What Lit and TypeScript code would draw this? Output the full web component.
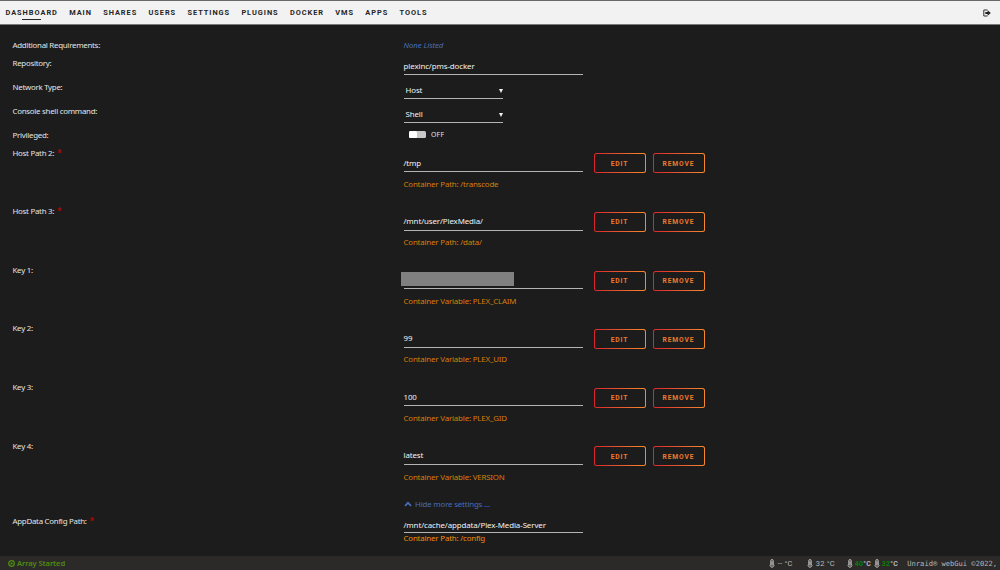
import { LitElement, html, css, svg } from "lit";
import { customElement } from "lit/decorators.js";

interface Setting {
  label: string;
  value: string;
  note: string;
  required?: boolean;
  masked?: boolean;
}

const MENU = ["DASHBOARD", "MAIN", "SHARES", "USERS", "SETTINGS", "PLUGINS", "DOCKER", "VMS", "APPS", "TOOLS"];

const SETTINGS: Setting[] = [
  { label: "Host Path 2:", value: "/tmp", note: "Container Path: /transcode", required: true },
  { label: "Host Path 3:", value: "/mnt/user/PlexMedia/", note: "Container Path: /data/", required: true },
  { label: "Key 1:", value: "", note: "Container Variable: PLEX_CLAIM", masked: true },
  { label: "Key 2:", value: "99", note: "Container Variable: PLEX_UID" },
  { label: "Key 3:", value: "100", note: "Container Variable: PLEX_GID" },
  { label: "Key 4:", value: "latest", note: "Container Variable: VERSION" },
];

const thermometer = html`<svg class="thermo" viewBox="0 0 6 9">
  ${svg`<path d="M1.7 5V1.8a1.3 1.3 0 0 1 2.6 0V5a1.9 1.9 0 1 1-2.6 0z" fill="#55524e" stroke="#b4b4b4" stroke-width=".9"/>
  <path d="M3 2.4v4" stroke="#e4e4e4" stroke-width=".8"/>`}
</svg>`;

@customElement("app-root")
export class AppRoot extends LitElement {
  static styles = css`
    * { box-sizing: border-box; }
    :host {
      display: flex;
      flex-direction: column;
      width: 1000px;
      height: 570px;
      overflow: hidden;
      background: #1c1c1c;
      color: #e4e4e4;
      font: 7.9px/10px "Noto Sans", sans-serif;
      letter-spacing: -.27px;
      white-space: nowrap;
    }
    .top {
      flex: none;
      display: flex;
      align-items: center;
      height: 25px;
      padding: 0 9px 0 5.5px;
      border-top: 1px solid #6b686b;
      border-bottom: 1px solid #777a78;
      background: #f2f2f2;
      color: #252525;
    }
    .menu { display: flex; flex: 1; gap: 11.3px; }
    .item {
      display: flex;
      flex-direction: column;
      align-items: center;
      font-family: Roboto, sans-serif;
      font-size: 7.4px;
      font-weight: 700;
      letter-spacing: .96px;
      height: 14px;
      padding-top: 2px;
    }
    .active::after { content: ""; flex: none; width: 19px; height: 1px; margin-top: 1px; background: #252525; }
    .logout { width: 8px; height: 8px; }
    .form { flex: 1; min-height: 0; padding: 12px 0 0 12.5px; overflow: hidden; }
    .row { display: grid; grid-template-columns: 391px 191px auto; height: 24px; }
    .short { height: 17px; }
    .short .label, .none { padding-top: 3px; }
    .switchrow { height: 18px; }
    .setting { height: 58.6px; }
    .toggle { height: 16.9px; }
    .label { padding-top: 4px; }
    .setting .label { padding-top: 3.6px; }
    .star { color: #d80000; margin-left: 1px; font-size: 8.5px; line-height: 8px; }
    .none { color: #486dba; font-style: italic; letter-spacing: -.1px; }
    .field { width: 179px; height: 21px; padding-top: 7px; border-bottom: 1px solid #b4b4b4; color: #f2f2f2; letter-spacing: -.1px; }
    .select { display: flex; justify-content: space-between; width: 99.5px; padding: 7px 0 0 2px; }
    .arrow { width: 4px; height: 4px; margin-top: 3.5px; }
    .setting .field { height: 28px; padding-top: 13.5px; }
    .mask { width: 112.5px; height: 13.5px; margin: -2.5px 0 0 -2.5px; background: #808080; }
    .note { margin-top: 6.6px; color: #d67e0a; letter-spacing: -.18px; }
    .tight .field { padding-top: 7.5px; }
    .tight .note { margin-top: 0; color: #ef8c08; }
    .switch { display: flex; align-items: center; gap: 5.5px; padding: 0 0 1px 5.5px; font-size: 6.8px; letter-spacing: .3px; }
    .track { width: 16.5px; height: 7.5px; border-radius: 1.5px; background: #c8c8c8; display: flex; }
    .thumb { width: 8px; border-radius: 1.5px; background: #fff; }
    .buttons { display: flex; gap: 7px; padding-top: 9.4px; margin-left: -1px; }
    .btn {
      display: grid;
      place-items: center;
      width: 52px;
      height: 20px;
      padding-top: 1px;
      border: 1.5px solid transparent;
      border-radius: 2.5px;
      background: linear-gradient(#1c1c1c, #1c1c1c) padding-box, linear-gradient(90deg, #d9262d, #f58a2e) border-box;
      color: #ee7b2b;
      font-family: Roboto, sans-serif;
      font-size: 6.7px;
      font-weight: 700;
      letter-spacing: .9px;
    }
    .hide { display: flex; gap: 3.5px; align-items: center; color: #486dba; letter-spacing: -.18px; }
    .chev { width: 8px; height: 6px; }
    .bottom {
      flex: none;
      display: flex;
      align-items: center;
      justify-content: space-between;
      height: 14px;
      padding: 0 3px 0 8px;
      background: #2b2a29;
      color: #b8b8b8;
    }
    .state { display: flex; align-items: center; gap: 2px; color: #4f8a10; font-weight: 600; font-size: 7.6px; letter-spacing: -.1px; }
    .play { width: 7px; height: 7px; }
    .right { display: flex; align-items: center; padding-top: 1px; font-family: Roboto, sans-serif; font-size: 7.5px; letter-spacing: .2px; }
    .temp { display: flex; align-items: center; gap: 2.5px; }
    .first { width: 38px; }
    .second { width: 40px; }
    .cpu { width: 27px; gap: 1.5px; font-weight: 700; font-size: 7px; }
    .ok { color: #087d08; }
    .thermo { width: 6px; height: 9px; }
    .copy { font: 7.1px/10px "DejaVu Sans Mono", monospace; letter-spacing: 0; margin-left: 6px; }
  `;

  private caret() {
    return html`<svg class="arrow" viewBox="0 0 4 4"><path d="M0 0h4L2 4z" fill="#f2f2f2" /></svg>`;
  }

  private setting(s: Setting) {
    return html`<div class="row setting">
      <div class="label">${s.label}${s.required ? html` <span class="star">*</span>` : ""}</div>
      <div>
        <div class="field">${s.masked ? html`<div class="mask"></div>` : s.value}</div>
        <div class="note">${s.note}</div>
      </div>
      <div class="buttons"><div class="btn">EDIT</div><div class="btn">REMOVE</div></div>
    </div>`;
  }

  render() {
    return html`
      <div class="top">
        <div class="menu">${MENU.map((m, i) => html`<div class="item ${i === 0 ? "active" : ""}">${m}</div>`)}</div>
        <svg class="logout" viewBox="0 0 8 8">
          <path d="M4.5 1H.8v6h3.7" fill="none" stroke="#333" stroke-width="1" />
          <path d="M2.3 3h2.3V1.2L7.8 4 4.6 6.8V5H2.3z" fill="#222" />
        </svg>
      </div>
      <div class="form">
        <div class="row short"><div class="label">Additional Requirements:</div><div class="none">None Listed</div></div>
        <div class="row"><div class="label">Repository:</div><div class="field">plexinc/pms-docker</div></div>
        <div class="row"><div class="label">Network Type:</div><div class="field select">Host${this.caret()}</div></div>
        <div class="row"><div class="label">Console shell command:</div><div class="field select">Shell${this.caret()}</div></div>
        <div class="row switchrow">
          <div class="label">Privileged:</div>
          <div class="switch"><div class="track"><div class="thumb"></div></div>OFF</div>
        </div>
        ${SETTINGS.map((s) => this.setting(s))}
        <div class="row toggle">
          <div></div>
          <div class="hide">
            <svg class="chev" viewBox="0 0 8 6"><path d="M1 4.8l3-3 3 3" fill="none" stroke="#486dba" stroke-width="1.7" /></svg>Hide more settings ...
          </div>
        </div>
        <div class="row tight">
          <div class="label">AppData Config Path: <span class="star">*</span></div>
          <div><div class="field">/mnt/cache/appdata/Plex-Media-Server</div><div class="note">Container Path: /config</div></div>
        </div>
      </div>
      <div class="bottom">
        <div class="state">
          <svg class="play" viewBox="0 0 7 7"><circle cx="3.5" cy="3.5" r="2.8" fill="none" stroke="#4f8a10" stroke-width="1.3" /><path d="M2.6 1.9v3.2l2.6-1.6z" fill="#4f8a10" /></svg>Array Started
        </div>
        <div class="right">
          <div class="temp first">${thermometer}<span>-- °C</span></div>
          <div class="temp second">${thermometer}<span>32 °C</span></div>
          <div class="temp cpu">${thermometer}<span><span class="ok">40</span>°C</span></div>
          <div class="temp cpu">${thermometer}<span><span class="ok">32</span>°C</span></div>
          <div class="copy">Unraid® webGui ©2022,</div>
        </div>
      </div>
    `;
  }
}
